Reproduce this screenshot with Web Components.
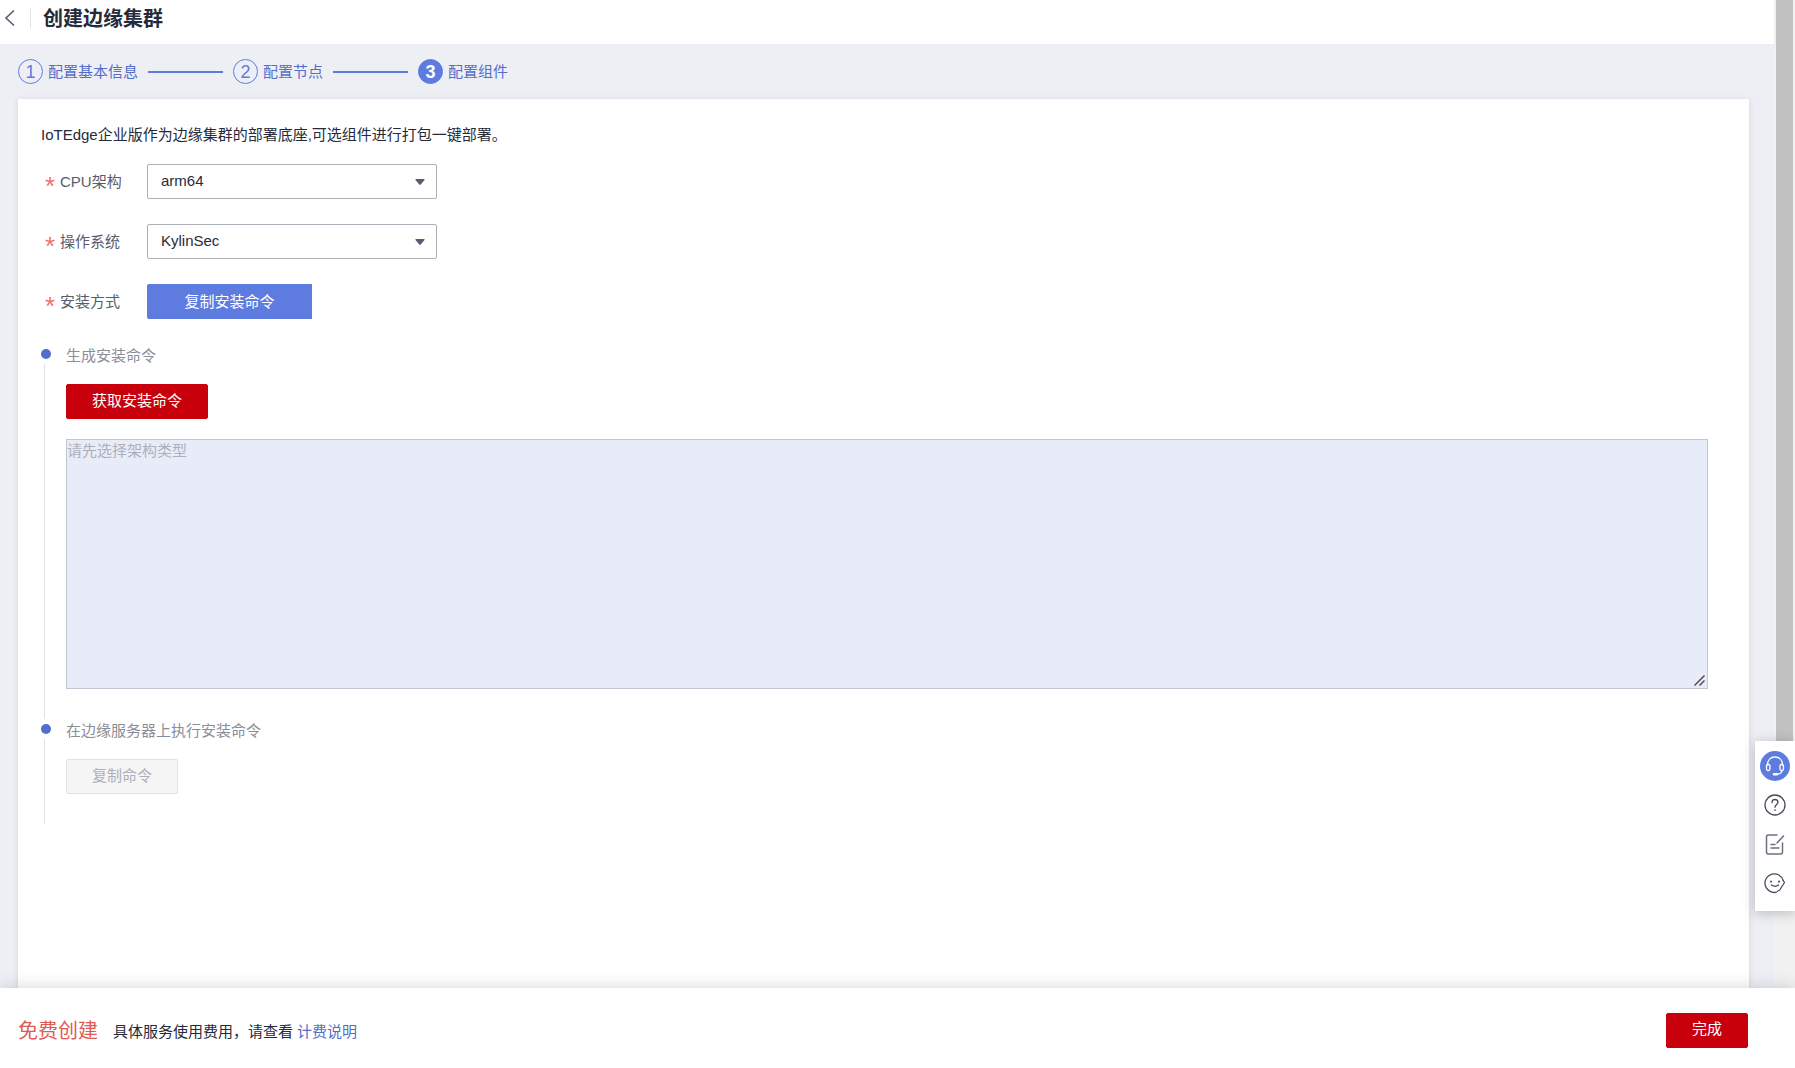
<!DOCTYPE html>
<html lang="zh-CN">
<head>
<meta charset="utf-8">
<title>创建边缘集群</title>
<style>
:root{
  --brand:#5e7ce0;--link:#526ecc;--text:#252b3a;--label:#575d6c;--muted:#8a8e99;
  --danger:#c7000b;--page:#eeeff5;
}
html,body{height:100%}
body{margin:0;background:#fff;color:var(--text);font:15px/20px "Liberation Sans","Noto Sans CJK SC",sans-serif}
</style>
</head>
<body>
<edge-app>
  <page-header slot="header">创建边缘集群</page-header>
  <step-bar slot="steps">
    <step-item num="1">配置基本信息</step-item>
    <step-item num="2">配置节点</step-item>
    <step-item num="3" current>配置组件</step-item>
  </step-bar>
  <content-card>
    <span slot="intro">IoTEdge企业版作为边缘集群的部署底座,可选组件进行打包一键部署。</span>
    <select-field label="CPU架构" options="arm64,x86_64"></select-field>
    <select-field label="操作系统" options="KylinSec,Ubuntu"></select-field>
    <choice-field label="安装方式">复制安装命令</choice-field>
    <time-step heading="生成安装命令">
      <ui-button kind="primary">获取安装命令</ui-button>
      <command-box hint="请先选择架构类型"></command-box>
    </time-step>
    <time-step heading="在边缘服务器上执行安装命令">
      <ui-button kind="disabled">复制命令</ui-button>
    </time-step>
  </content-card>
  <page-footer slot="footer">
    <span slot="price">免费创建</span>
    <span slot="note">具体服务使用费用，请查看</span>
    <ui-button kind="primary" slot="action">完成</ui-button>
  </page-footer>
</edge-app>
<help-dock></help-dock>

<script>
function define(name, render){
  customElements.define(name, class extends HTMLElement{
    constructor(){ super(); this.attachShadow({mode:'open'}); }
    connectedCallback(){ this.shadowRoot.innerHTML = '<style>*{box-sizing:border-box}:host{box-sizing:border-box}</style>' + render(this); }
  });
}

define('edge-app', () => `<style>
  :host{display:flex;flex-direction:column;height:100vh;overflow:hidden}
  .view{flex:1;min-height:0;display:flex}
  .scroll{flex:1;min-width:0;display:flex;flex-direction:column;background:var(--page);overflow:hidden}
  main{flex:1;min-height:0;display:flex;padding:0 25px 0 18px}
  main ::slotted(*){flex:1;min-width:0}
  .track{width:21px;background:#f1f1f1;padding:0 2px}
  .thumb{height:80%;background:#c1c1c1}
</style>
<div class="view">
  <div class="scroll"><slot name="header"></slot><slot name="steps"></slot><main><slot></slot></main></div>
  <div class="track"><div class="thumb"></div></div>
</div>
<slot name="footer"></slot>`);

define('page-header', () => `<style>
  :host{display:flex;align-items:center;height:44px;padding:0 4px 8px;background:#fff;flex:none}
  button{border:0;background:none;padding:0;width:12px;height:18px;display:flex}
  .bar{width:1px;height:20px;background:#dfe1e6;margin:0 12px 0 14px}
  h1{margin:0;padding-top:2px;font-size:20px;line-height:28px;font-weight:700}
</style>
<button aria-label="返回"><svg width="12" height="18" viewBox="0 0 12 18" fill="none" stroke="#575d6c" stroke-width="1.6"><path d="M10 1.5 2 9l8 7.5"/></svg></button>
<span class="bar"></span><h1><slot></slot></h1>`);

define('step-bar', () => `<style>
  :host{display:flex;align-items:center;height:55px;padding:0 18px;flex:none}
</style><slot></slot>`);

define('step-item', el => `<style>
  :host{display:flex;align-items:center;color:var(--link)}
  .num{width:25px;height:25px;border:1px solid var(--brand);border-radius:50%;display:flex;align-items:center;justify-content:center;font-size:18px;color:var(--brand);margin-right:5px}
  :host([current]) .num{background:var(--brand);color:#fff;font-weight:700}
  .line{width:75px;height:2px;background:var(--brand);margin:0 10px}
</style><span class="num">${el.getAttribute('num')}</span><slot></slot>${el.hasAttribute('current') ? '' : '<span class="line"></span>'}`);

define('content-card', () => `<style>
  :host{display:block;background:#fff;padding:26px 41px 0 23px;box-shadow:0 1px 6px rgba(37,43,58,.12)}
  p{margin:0 0 19px;line-height:20px}
</style><p><slot name="intro"></slot></p><slot></slot>`);

const fieldCss = `
  :host{display:flex;align-items:center;height:35px;margin-bottom:25px}
  .label{display:flex;align-items:center;width:106px;padding-left:4px;color:var(--label)}
  .star{width:15px;height:20px;font-size:26px;line-height:28px;color:#f66f6a}`;

define('select-field', el => `<style>${fieldCss}
  .box{display:grid;grid-template:35px / 290px;align-items:center}
  select{grid-area:1/1;width:100%;height:35px;appearance:none;border:1px solid #adb0b8;border-radius:2px;background:#fff;padding:0 13px 2px;font:inherit;color:var(--text)}
  svg{grid-area:1/1;justify-self:end;margin-right:12px;pointer-events:none}
</style>
<label class="label" for="s"><span class="star">*</span>${el.getAttribute('label')}</label>
<div class="box"><select id="s">${el.getAttribute('options').split(',').map(o => `<option>${o}</option>`).join('')}</select>
<svg width="10" height="6" viewBox="0 0 10 6"><path d="M1 0h8q1 0 .5 1L5.7 5.5q-.7.8-1.4 0L.5 1Q0 0 1 0z" fill="#575d6c"/></svg></div>`);

define('choice-field', el => `<style>${fieldCss}
  :host{margin-bottom:23px}
  button{width:165px;height:35px;border:0;border-radius:2px 0 0 2px;background:var(--brand);color:#fff;font:inherit;padding:0}
</style>
<span class="label" id="l"><span class="star">*</span>${el.getAttribute('label')}</span>
<button aria-describedby="l"><slot></slot></button>`);

define('time-step', el => `<style>
  :host{display:grid;grid-template-columns:25px 1fr}
  .rail{display:flex;flex-direction:column;padding-top:7px}
  .dot{width:10px;height:10px;border-radius:50%;background:var(--link)}
  .line{flex:1;width:1px;background:#dfe1e6;margin:5px 0 -2px 3px}
  h2{margin:0 0 16px;padding-top:2px;font-size:15px;line-height:24px;font-weight:400;color:var(--muted)}
  .body{padding-bottom:28px}
</style>
<div class="rail"><span class="dot"></span><span class="line"></span></div>
<div class="body"><h2>${el.getAttribute('heading')}</h2><slot></slot></div>`);

define('ui-button', el => `<style>
  :host{display:block}
  button{display:block;height:35px;padding:0 25px 2px;border:1px solid var(--danger);border-radius:2px;background:var(--danger);color:#fff;font:inherit;white-space:nowrap}
  button:disabled{background:#f5f5f5;border-color:#dfe1e6;color:#adb0b8}
</style><button${el.getAttribute('kind') === 'disabled' ? ' disabled' : ''}><slot></slot></button>`);

define('command-box', el => `<style>
  :host{display:grid;margin-top:20px}
  textarea{grid-area:1/1;display:block;width:100%;height:250px;border:1px solid #c3c6d0;background:#e8ecf8;padding:0;font:inherit;line-height:22px;color:var(--text);resize:vertical;outline:0}
  textarea::placeholder{color:#adb0b8}
  textarea::-webkit-resizer{background:transparent}
  svg{grid-area:1/1;place-self:end;margin:3px;pointer-events:none}
</style><textarea aria-label="安装命令" placeholder="${el.getAttribute('hint')}"></textarea>
<svg width="11" height="11" viewBox="0 0 11 11" fill="none" stroke="#505050" stroke-width="1.5"><path d="M.5 10.500 10.500.5M5.500 10.500l5-5"/></svg>`);

define('page-footer', () => `<style>
  :host{display:flex;align-items:center;height:80px;padding:4px 47px 0 18px;background:#fff;box-shadow:0 0 16px rgba(37,43,58,.2);z-index:1;flex:none}
  .price{padding-top:2px;font-size:20px;line-height:28px;color:#e05a55;margin-right:15px}
  .note{padding-top:4px;margin-right:4px}
  a{padding-top:4px;color:var(--link);text-decoration:none}
  .action{margin-left:auto}
</style>
<span class="price"><slot name="price"></slot></span><span class="note"><slot name="note"></slot></span><a href="#">计费说明</a><div class="action"><slot name="action"></slot></div>`);

define('help-dock', () => `<style>
  :host{position:fixed;right:0;top:741px;width:40px;height:170px;background:#fff;box-shadow:0 2px 12px rgba(37,43,58,.28);display:flex;flex-direction:column;align-items:center;padding-top:10px;z-index:2}
  button{border:0;padding:0;background:none;display:flex;align-items:center;justify-content:center;width:30px;height:39px}
  svg{fill:none;stroke:#464c59;stroke-width:1.3;stroke-linecap:round;stroke-linejoin:round}
  .service{height:30px;border-radius:50%;background:var(--brand);margin-bottom:4px}
  .service svg{stroke:#fff}
  .note svg{stroke:#6c717d;stroke-width:1.5}
</style>
<button class="service" aria-label="客服"><svg width="22" height="22" viewBox="0 0 22 22"><path d="M3.500 10C3.500 5 6.500 2 11 2s7.500 3 7.500 8"/><rect x="2.500" y="9.500" width="3.500" height="6" rx="1.500"/><rect x="16" y="9.500" width="3.500" height="6" rx="1.500"/><path d="M18 15.500c0 2-2 3.300-4.500 3.700"/><path d="M10 19.300h3" stroke-width="2.400"/></svg></button>
<button aria-label="帮助"><svg width="22" height="22" viewBox="0 0 22 22"><circle cx="11" cy="11" r="10"/><path d="M8 8.700C8 6.700 9.300 5.500 11 5.500s3 1.200 3 2.900c0 2-3 2.400-3 4.900"/><path d="M11 16v.3" stroke-width="1.600"/></svg></button>
<button class="note" aria-label="反馈"><svg width="22" height="22" viewBox="0 0 22 22"><path d="M13 2H4.500Q2.500 2 2.500 4v15q0 2 2 2h12q2 0 2-2V10"/><path d="M19.500 3 13 10M7 11.500h4M7 15h8"/></svg></button>
<button aria-label="评价"><svg width="22" height="22" viewBox="0 0 22 22"><path d="M12.500 20.200A9.300 9.300 0 1 1 19.200 8.500"/><path d="M19.200 8.500l1.300 2-4.800 7.500-2.200 1.200"/><path d="M7.500 13q3.500 2.600 7 0"/><path d="M7 9.500v.2M15 9.500v.2" stroke-width="1.900"/></svg></button>`);
</script>
</body>
</html>
